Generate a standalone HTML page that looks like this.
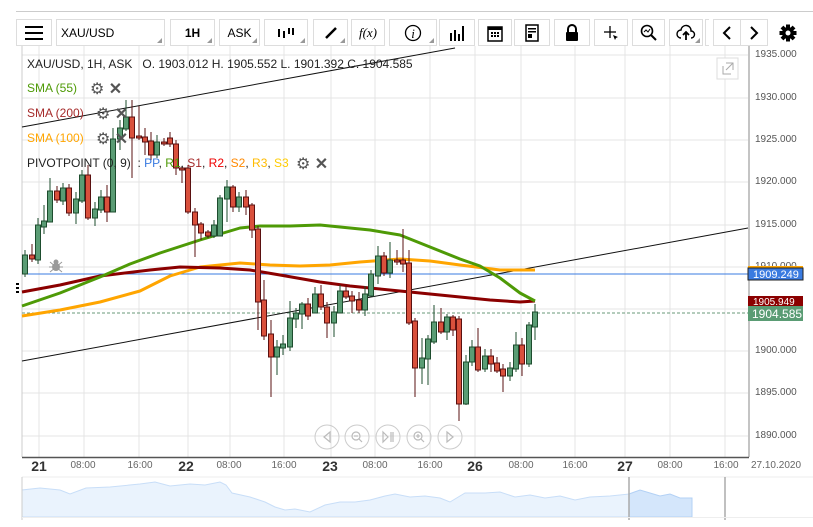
<!DOCTYPE html>
<html><head><meta charset="utf-8"><style>
body{margin:0;width:813px;height:527px;background:#fff;position:relative;overflow:hidden;font-family:"Liberation Sans",sans-serif}
.b{position:absolute;top:19px;height:27px;border:1px solid #ddd;background:#fff;box-sizing:border-box;font-size:12px;display:flex;align-items:center;justify-content:center;color:#000}
.tri{position:absolute;right:2px;bottom:2px;width:0;height:0;border-left:5px solid transparent;border-bottom:5px solid #999}
.t{position:absolute;font-size:12px;white-space:nowrap}
.ax{position:absolute;font-size:10px;color:#555;left:755px}
.d{position:absolute;top:460px;font-size:10px;color:#666;transform:translateX(-50%)}
.D{position:absolute;top:458px;font-size:14px;font-weight:bold;color:#333;transform:translateX(-50%)}
.ic{position:absolute;font-size:16px;color:#555;white-space:nowrap}
</style></head><body>
<div style="position:absolute;left:16px;top:11px;width:797px;height:1px;background:#ccc"></div>
<div class="b" style="left:16px;width:36px"><svg width="18" height="14"><rect y="0" width="18" height="2"/><rect y="6" width="18" height="2"/><rect y="12" width="18" height="2"/></svg></div>
<div class="b" style="left:56px;width:109px;justify-content:flex-start;padding-left:4px">XAU/USD<div class="tri"></div></div>
<div class="b" style="left:170px;width:45px;font-weight:bold">1H<div class="tri"></div></div>
<div class="b" style="left:219px;width:41px">ASK<div class="tri"></div></div>
<div class="b" style="left:264px;width:44px"><svg width="18" height="12"><g stroke="#000" stroke-width="2"><line x1="2" y1="2" x2="2" y2="10"/><line x1="7" y1="4" x2="7" y2="11"/><line x1="12" y1="1" x2="12" y2="7"/><line x1="16" y1="1" x2="16" y2="8"/></g></svg><div class="tri"></div></div>
<div class="b" style="left:313px;width:35px"><svg width="14" height="14"><line x1="2" y1="12" x2="12" y2="2" stroke="#000" stroke-width="2.5"/></svg><div class="tri"></div></div>
<div class="b" style="left:351px;width:34px;font-family:'Liberation Serif',serif;font-style:italic;font-size:13px">f(x)</div>
<div class="b" style="left:389px;width:48px"><svg width="18" height="18"><circle cx="9" cy="9" r="7.5" fill="none" stroke="#000" stroke-width="1.3"/><text x="9" y="14" font-family="Liberation Serif" font-style="italic" font-size="13" text-anchor="middle">i</text></svg><div class="tri"></div></div>
<div class="b" style="left:439px;width:36px"><svg width="16" height="16"><g fill="#000"><rect x="1" y="8" width="2" height="8"/><rect x="5" y="5" width="2" height="11"/><rect x="9" y="9" width="2" height="7"/><rect x="13" y="1" width="2" height="15"/></g></svg></div>
<div class="b" style="left:478px;width:34px"><svg width="16" height="18"><rect x="1" y="3" width="14" height="14" fill="none" stroke="#000" stroke-width="1.5"/><rect x="1" y="3" width="14" height="3" fill="#000"/><g fill="#000"><rect x="4" y="8" width="2" height="2"/><rect x="7" y="8" width="2" height="2"/><rect x="10" y="8" width="2" height="2"/><rect x="4" y="11" width="2" height="2"/><rect x="7" y="11" width="2" height="2"/><rect x="10" y="11" width="2" height="2"/></g></svg></div>
<div class="b" style="left:514px;width:36px"><svg width="14" height="18"><rect x="1" y="1" width="12" height="16" fill="none" stroke="#000" stroke-width="1.5"/><rect x="3" y="4" width="8" height="1.5"/><rect x="3" y="7" width="8" height="1.5"/><rect x="3" y="10" width="4" height="4" fill="#000"/></svg></div>
<div class="b" style="left:554px;width:36px"><svg width="14" height="18"><path d="M3 8V5a4 4 0 0 1 8 0v3" fill="none" stroke="#000" stroke-width="2"/><rect x="1" y="8" width="12" height="9" rx="1"/></svg></div>
<div class="b" style="left:594px;width:34px"><svg width="16" height="16"><g stroke="#000" stroke-width="1.3"><line x1="7" y1="1" x2="7" y2="13"/><line x1="1" y1="7" x2="13" y2="7"/></g><path d="M10 10l5 2-2 1-1 2z"/></svg></div>
<div class="b" style="left:632px;width:33px"><svg width="18" height="18"><circle cx="7" cy="7" r="5.5" fill="none" stroke="#000" stroke-width="1.6"/><line x1="11" y1="11" x2="16" y2="16" stroke="#000" stroke-width="2"/><path d="M4 8l2-2 2 2 2-3" fill="none" stroke="#000"/></svg></div>
<div class="b" style="left:669px;width:34px"><svg width="20" height="18"><path d="M5 14a4 4 0 0 1 0-8 5 5 0 0 1 10 1 3.5 3.5 0 0 1 0 7" fill="none" stroke="#000" stroke-width="1.4"/><path d="M10 16V8M7 11l3-3 3 3" fill="none" stroke="#000" stroke-width="1.8"/></svg><div class="tri"></div></div>
<div class="b" style="left:705px;width:4px;border-right:none"></div>
<div class="b" style="left:713px;width:28px"><svg width="10" height="16"><path d="M8 2L2 8l6 6" fill="none" stroke="#000" stroke-width="2"/></svg></div>
<div class="b" style="left:740px;width:28px"><svg width="10" height="16"><path d="M2 2l6 6-6 6" fill="none" stroke="#000" stroke-width="2"/></svg></div>
<div style="position:absolute;left:779px;top:24px"><svg width="18" height="18" viewBox="0 0 18 18"><g fill="#000"><circle cx="9" cy="9" r="6"/><rect x="7" y="0.5" width="4" height="17"/><rect x="0.5" y="7" width="17" height="4"/><rect x="7" y="0.5" width="4" height="17" transform="rotate(45 9 9)"/><rect x="7" y="0.5" width="4" height="17" transform="rotate(-45 9 9)"/></g><circle cx="9" cy="9" r="2.5" fill="#fff"/></svg></div>

<div class="ax" style="top:261px">1910.000</div>
<svg style="position:absolute;left:0;top:0" width="813" height="527">
<g stroke="#e4e4e4" stroke-width="1">
<line x1="22" y1="55" x2="748" y2="55"/><line x1="22" y1="98" x2="748" y2="98"/><line x1="22" y1="140" x2="748" y2="140"/><line x1="22" y1="182" x2="748" y2="182"/><line x1="22" y1="225" x2="748" y2="225"/><line x1="22" y1="267" x2="748" y2="267"/><line x1="22" y1="309" x2="748" y2="309"/><line x1="22" y1="351" x2="748" y2="351"/><line x1="22" y1="393" x2="748" y2="393"/><line x1="22" y1="436" x2="748" y2="436"/>
<line x1="39" y1="46" x2="39" y2="457"/><line x1="84" y1="46" x2="84" y2="457"/><line x1="139" y1="46" x2="139" y2="457"/><line x1="188" y1="46" x2="188" y2="457"/><line x1="230" y1="46" x2="230" y2="457"/><line x1="284" y1="46" x2="284" y2="457"/><line x1="331" y1="46" x2="331" y2="457"/><line x1="375" y1="46" x2="375" y2="457"/><line x1="430" y1="46" x2="430" y2="457"/><line x1="475" y1="46" x2="475" y2="457"/><line x1="521" y1="46" x2="521" y2="457"/><line x1="575" y1="46" x2="575" y2="457"/><line x1="625" y1="46" x2="625" y2="457"/><line x1="670" y1="46" x2="670" y2="457"/><line x1="725" y1="46" x2="725" y2="457"/>
</g>
<line x1="22" y1="46" x2="22" y2="457" stroke="#ccc"/>
<line x1="749" y1="46" x2="749" y2="457" stroke="#888"/>
<line x1="22" y1="457.5" x2="749" y2="457.5" stroke="#555" stroke-width="1.5"/>
<line x1="22" y1="274" x2="748" y2="274" stroke="#3a7be0"/>
<line x1="22" y1="313" x2="748" y2="313" stroke="#6a9a7a" stroke-dasharray="3,2"/>
<line x1="22" y1="127" x2="455" y2="48" stroke="#111"/>
<line x1="22" y1="361" x2="748" y2="228" stroke="#111"/>
<g stroke-width="3" fill="none" stroke-linejoin="round">
<polyline stroke="#ffa500" points="22,316 60,310 100,302 140,291 170,276 200,267 240,263 270,265 300,266 330,265 360,262 400,259 430,261 460,265 500,270 535,270"/>
<polyline stroke="#8b0000" points="22,292 60,285 100,276 150,270 180,267 220,268 250,270 280,275 320,282 350,286 380,289 410,292 450,296 490,300 520,302 535,301"/>
<polyline stroke="#4e9a06" points="22,306 60,293 100,277 130,264 160,253 200,240 240,228 260,226 290,226 320,225 340,227 370,230 400,235 430,247 460,259 480,266 500,278 520,293 535,301"/>
</g>
</svg>
<svg style="position:absolute;left:0;top:0" width="813" height="527">
<g stroke="#1d4d2e" fill="#5a9c74">
<line x1="25" y1="250" x2="25" y2="277"/><rect x="22.5" y="255" width="5" height="19"/>
<line x1="38" y1="218" x2="38" y2="264"/><rect x="35.5" y="225" width="5" height="35"/>
<line x1="44" y1="205" x2="44" y2="234"/><rect x="41.5" y="221" width="5" height="6"/>
<line x1="50" y1="178" x2="50" y2="222"/><rect x="47.5" y="191" width="5" height="31"/>
<line x1="63" y1="183" x2="63" y2="205"/><rect x="60.5" y="188" width="5" height="13"/>
<line x1="76" y1="192" x2="76" y2="224"/><rect x="73.5" y="199" width="5" height="14"/>
<line x1="82" y1="170" x2="82" y2="203"/><rect x="79.5" y="175" width="5" height="26"/>
<line x1="95" y1="202" x2="95" y2="226"/><rect x="92.5" y="209" width="5" height="9"/>
<line x1="101" y1="190" x2="101" y2="213"/><rect x="98.5" y="197" width="5" height="13"/>
<line x1="113" y1="128" x2="113" y2="212"/><rect x="110.5" y="139" width="5" height="73"/>
<line x1="120" y1="120" x2="120" y2="150"/><rect x="117.5" y="128" width="5" height="11"/>
<line x1="126" y1="100" x2="126" y2="131"/><rect x="123.5" y="117" width="5" height="12"/>
<line x1="157" y1="135" x2="157" y2="158"/><rect x="154.5" y="142" width="5" height="13"/>
<line x1="214" y1="220" x2="214" y2="238"/><rect x="211.5" y="225" width="5" height="11"/>
<line x1="220" y1="195" x2="220" y2="236"/><rect x="217.5" y="198" width="5" height="38"/>
<line x1="227" y1="180" x2="227" y2="222"/><rect x="224.5" y="187" width="5" height="12"/>
<line x1="239" y1="192" x2="239" y2="212"/><rect x="236.5" y="197" width="5" height="10"/>
<line x1="277" y1="340" x2="277" y2="375"/><rect x="274.5" y="347" width="5" height="10"/>
<line x1="283" y1="335" x2="283" y2="355"/><rect x="280.5" y="344" width="5" height="4"/>
<line x1="290" y1="301" x2="290" y2="351"/><rect x="287.5" y="318" width="5" height="29"/>
<line x1="296" y1="308" x2="296" y2="328"/><rect x="293.5" y="313" width="5" height="6"/>
<line x1="302" y1="302" x2="302" y2="329"/><rect x="299.5" y="304" width="5" height="10"/>
<line x1="315" y1="287" x2="315" y2="313"/><rect x="312.5" y="294" width="5" height="19"/>
<line x1="334" y1="306" x2="334" y2="337"/><rect x="331.5" y="312" width="5" height="11"/>
<line x1="340" y1="285" x2="340" y2="313"/><rect x="337.5" y="291" width="5" height="22"/>
<line x1="365" y1="286" x2="365" y2="316"/><rect x="362.5" y="294" width="5" height="16"/>
<line x1="371" y1="270" x2="371" y2="296"/><rect x="368.5" y="274" width="5" height="22"/>
<line x1="378" y1="246" x2="378" y2="284"/><rect x="375.5" y="256" width="5" height="20"/>
<line x1="390" y1="242" x2="390" y2="278"/><rect x="387.5" y="260" width="5" height="13"/>
<line x1="422" y1="338" x2="422" y2="384"/><rect x="419.5" y="358" width="5" height="10"/>
<line x1="428" y1="335" x2="428" y2="385"/><rect x="425.5" y="339" width="5" height="20"/>
<line x1="434" y1="305" x2="434" y2="344"/><rect x="431.5" y="322" width="5" height="20"/>
<line x1="447" y1="314" x2="447" y2="340"/><rect x="444.5" y="317" width="5" height="15"/>
<line x1="466" y1="355" x2="466" y2="405"/><rect x="463.5" y="362" width="5" height="42"/>
<line x1="472" y1="340" x2="472" y2="366"/><rect x="469.5" y="347" width="5" height="15"/>
<line x1="485" y1="349" x2="485" y2="372"/><rect x="482.5" y="356" width="5" height="13"/>
<line x1="510" y1="362" x2="510" y2="381"/><rect x="507.5" y="368" width="5" height="8"/>
<line x1="516" y1="332" x2="516" y2="372"/><rect x="513.5" y="345" width="5" height="24"/>
<line x1="529" y1="322" x2="529" y2="367"/><rect x="526.5" y="325" width="5" height="39"/>
<line x1="535" y1="304" x2="535" y2="340"/><rect x="532.5" y="312" width="5" height="15"/>
</g>
<g stroke="#5a1010" fill="#d9503c">
<line x1="32" y1="244" x2="32" y2="262"/><rect x="29.5" y="255" width="5" height="4"/>
<line x1="57" y1="186" x2="57" y2="203"/><rect x="54.5" y="191" width="5" height="9"/>
<line x1="69" y1="184" x2="69" y2="216"/><rect x="66.5" y="188" width="5" height="25"/>
<line x1="88" y1="165" x2="88" y2="220"/><rect x="85.5" y="175" width="5" height="43"/>
<line x1="107" y1="185" x2="107" y2="222"/><rect x="104.5" y="197" width="5" height="15"/>
<line x1="132" y1="100" x2="132" y2="178"/><rect x="129.5" y="117" width="5" height="21"/>
<line x1="139" y1="106" x2="139" y2="140"/><rect x="136.5" y="136" width="5" height="2"/>
<line x1="145" y1="128" x2="145" y2="155"/><rect x="142.5" y="137" width="5" height="5"/>
<line x1="151" y1="132" x2="151" y2="160"/><rect x="148.5" y="141" width="5" height="14"/>
<line x1="164" y1="138" x2="164" y2="146"/><rect x="161.5" y="142" width="5" height="2"/>
<line x1="170" y1="132" x2="170" y2="147"/><rect x="167.5" y="138" width="5" height="6"/>
<line x1="176" y1="140" x2="176" y2="175"/><rect x="173.5" y="144" width="5" height="24"/>
<line x1="182" y1="166" x2="182" y2="183"/><rect x="179.5" y="168" width="5" height="2"/>
<line x1="188" y1="165" x2="188" y2="214"/><rect x="185.5" y="168" width="5" height="44"/>
<line x1="195" y1="208" x2="195" y2="257"/><rect x="192.5" y="212" width="5" height="13"/>
<line x1="201" y1="222" x2="201" y2="240"/><rect x="198.5" y="224" width="5" height="9"/>
<line x1="208" y1="230" x2="208" y2="238"/><rect x="205.5" y="232" width="5" height="4"/>
<line x1="233" y1="185" x2="233" y2="212"/><rect x="230.5" y="187" width="5" height="20"/>
<line x1="246" y1="190" x2="246" y2="215"/><rect x="243.5" y="197" width="5" height="10"/>
<line x1="252" y1="203" x2="252" y2="238"/><rect x="249.5" y="205" width="5" height="25"/>
<line x1="258" y1="226" x2="258" y2="330"/><rect x="255.5" y="229" width="5" height="73"/>
<line x1="264" y1="280" x2="264" y2="340"/><rect x="261.5" y="300" width="5" height="36"/>
<line x1="271" y1="320" x2="271" y2="397"/><rect x="268.5" y="334" width="5" height="23"/>
<line x1="308" y1="298" x2="308" y2="320"/><rect x="305.5" y="304" width="5" height="12"/>
<line x1="321" y1="285" x2="321" y2="310"/><rect x="318.5" y="294" width="5" height="13"/>
<line x1="327" y1="302" x2="327" y2="338"/><rect x="324.5" y="307" width="5" height="16"/>
<line x1="346" y1="285" x2="346" y2="299"/><rect x="343.5" y="291" width="5" height="6"/>
<line x1="352" y1="291" x2="352" y2="313"/><rect x="349.5" y="296" width="5" height="5"/>
<line x1="359" y1="292" x2="359" y2="313"/><rect x="356.5" y="300" width="5" height="10"/>
<line x1="384" y1="252" x2="384" y2="276"/><rect x="381.5" y="256" width="5" height="17"/>
<line x1="397" y1="250" x2="397" y2="265"/><rect x="394.5" y="260" width="5" height="2"/>
<line x1="403" y1="229" x2="403" y2="272"/><rect x="400.5" y="260" width="5" height="4"/>
<line x1="409" y1="250" x2="409" y2="325"/><rect x="406.5" y="263" width="5" height="60"/>
<line x1="415" y1="318" x2="415" y2="397"/><rect x="412.5" y="321" width="5" height="47"/>
<line x1="441" y1="308" x2="441" y2="334"/><rect x="438.5" y="322" width="5" height="10"/>
<line x1="453" y1="315" x2="453" y2="336"/><rect x="450.5" y="317" width="5" height="13"/>
<line x1="459" y1="316" x2="459" y2="421"/><rect x="456.5" y="319" width="5" height="85"/>
<line x1="478" y1="328" x2="478" y2="372"/><rect x="475.5" y="347" width="5" height="23"/>
<line x1="491" y1="349" x2="491" y2="372"/><rect x="488.5" y="356" width="5" height="8"/>
<line x1="497" y1="357" x2="497" y2="373"/><rect x="494.5" y="363" width="5" height="8"/>
<line x1="503" y1="364" x2="503" y2="392"/><rect x="500.5" y="369" width="5" height="7"/>
<line x1="522" y1="338" x2="522" y2="376"/><rect x="519.5" y="345" width="5" height="19"/>
</g>
<g fill="#999"><circle cx="56" cy="267" r="4"/><circle cx="56" cy="262" r="2.5"/></g>
<g stroke="#999" stroke-width="1"><line x1="50" y1="262" x2="62" y2="272"/><line x1="62" y1="262" x2="50" y2="272"/><line x1="49" y1="267" x2="63" y2="267"/></g>
<g fill="#000"><rect x="16" y="283" width="3" height="2"/><rect x="16" y="287" width="3" height="2"/><rect x="16" y="291" width="3" height="2"/></g>
<g fill="none" stroke="#ccc"><circle cx="327" cy="437" r="12"/><circle cx="357" cy="437" r="12"/><circle cx="388" cy="437" r="12"/><circle cx="419" cy="437" r="12"/><circle cx="450" cy="437" r="12"/></g>
<g fill="none" stroke="#bbb" stroke-width="1.2"><path d="M330 432l-6 5 6 5z"/><circle cx="356" cy="436" r="4"/><line x1="359" y1="439" x2="362" y2="442"/><line x1="354" y1="436" x2="358" y2="436"/><path d="M383 432l5 5-5 5z"/><line x1="391" y1="432" x2="391" y2="442"/><line x1="393" y1="432" x2="393" y2="442"/><circle cx="418" cy="436" r="4"/><line x1="421" y1="439" x2="424" y2="442"/><line x1="416" y1="436" x2="420" y2="436"/><line x1="418" y1="434" x2="418" y2="438"/><path d="M447 432l6 5-6 5z"/></g>
<rect x="717" y="58" width="21" height="21" fill="#fff" stroke="#ddd"/>
<path d="M723 66v8h8M726 63h7v7M726 70l7-7" fill="none" stroke="#aaa"/>
<rect x="748" y="266" width="55" height="3" fill="#ffa500"/>
<rect x="748" y="268" width="55" height="12" fill="#3a7be0" stroke="#222"/>
<text x="753" y="278" font-size="11" fill="#fff" font-family="Liberation Sans">1909.249</text>
<rect x="748" y="296" width="55" height="10" fill="#8b0000"/>
<text x="753" y="305" font-size="10" fill="#fff" font-family="Liberation Sans">1905.949</text>
<rect x="748" y="306" width="55" height="15" fill="#5a9c74"/>
<text x="752" y="318" font-size="12" fill="#fff" font-family="Liberation Sans">1904.585</text>
<line x1="22" y1="477" x2="813" y2="477" stroke="#eee"/>
<path d="M22 517 L22 490 40 488 60 490 70 494 86 488 110 487 140 484 155 482 170 486 190 484 205 485 220 482 226 485 232 493 250 497 265 502 275 507 285 510 295 509 310 512 325 505 340 502 355 502 370 500 385 496 395 494 410 497 425 496 440 498 450 502 465 493 485 493 500 492 515 497 530 495 545 498 560 496 575 500 590 497 610 496 629 494 L629 517Z" fill="#eaf3fd" stroke="#c8def8"/>
<path d="M629 517 L629 494 640 490 650 493 660 496 670 494 680 498 692 498 L692 517Z" fill="#d4e6fb" stroke="#b3d1f5"/>
<line x1="629" y1="477" x2="629" y2="520" stroke="#aaa" stroke-width="1.5"/>
<line x1="725" y1="477" x2="725" y2="520" stroke="#aaa" stroke-width="1.5"/>
<line x1="22" y1="477" x2="22" y2="520" stroke="#ccc"/>
<line x1="22" y1="517.5" x2="813" y2="517.5" stroke="#eee"/>
</svg>

<div class="t" style="left:27px;top:57px;color:#222">XAU/USD, 1H, ASK &nbsp; O. 1903.012 H. 1905.552 L. 1901.392 C. 1904.585</div>
<div class="t" style="left:27px;top:81px;color:#4e9a06">SMA (55)</div>
<div class="t" style="left:27px;top:106px;color:#a52a2a">SMA (200)</div>
<div class="t" style="left:27px;top:131px;color:#ffa500">SMA (100)</div>
<div class="t" style="left:27px;top:156px;color:#222">PIVOTPOINT (0, 9) &nbsp;: <span style="color:#3a7be0">PP</span>, <span style="color:#4e9a06">R1</span>, <span style="color:#a52a2a">S1</span>, <span style="color:#e00">R2</span>, <span style="color:#f80">S2</span>, <span style="color:#fb0">R3</span>, <span style="color:#fc0">S3</span></div>
<div class="ic" style="left:90px;top:79px">⚙ <b>✕</b></div>
<div class="ic" style="left:96px;top:104px">⚙ <b>✕</b></div>
<div class="ic" style="left:96px;top:129px">⚙ <b>✕</b></div>
<div class="ic" style="left:296px;top:154px">⚙ <b>✕</b></div>

<div class="ax" style="top:49px">1935.000</div>
<div class="ax" style="top:92px">1930.000</div>
<div class="ax" style="top:134px">1925.000</div>
<div class="ax" style="top:176px">1920.000</div>
<div class="ax" style="top:219px">1915.000</div>
<div class="ax" style="top:387px">1895.000</div>
<div class="ax" style="top:345px">1900.000</div>
<div class="ax" style="top:430px">1890.000</div>

<div class="D" style="left:39px">21</div><div class="d" style="left:83px">08:00</div><div class="d" style="left:140px">16:00</div>
<div class="D" style="left:186px">22</div><div class="d" style="left:229px">08:00</div><div class="d" style="left:284px">16:00</div>
<div class="D" style="left:330px">23</div><div class="d" style="left:375px">08:00</div><div class="d" style="left:430px">16:00</div>
<div class="D" style="left:475px">26</div><div class="d" style="left:521px">08:00</div><div class="d" style="left:575px">16:00</div>
<div class="D" style="left:625px">27</div><div class="d" style="left:670px">08:00</div><div class="d" style="left:726px">16:00</div>
<div class="d" style="left:776px">27.10.2020</div>
</body></html>
